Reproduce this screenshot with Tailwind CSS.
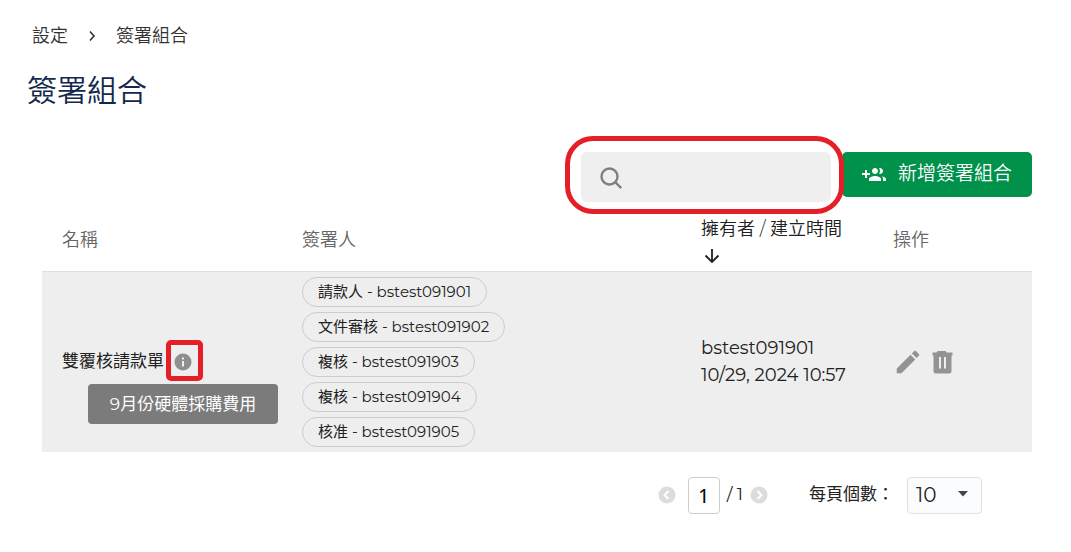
<!DOCTYPE html>
<html lang="zh-Hant">
<head>
  <meta charset="UTF-8" />
  <meta name="viewport" content="width=device-width, initial-scale=1.0"/>
  <title>簽署組合</title>
  <script src="https://cdn.jsdelivr.net/npm/@tailwindcss/browser@4"></script>
</head>
<body class="bg-white text-[#212121] font-['Montserrat','Inter','Noto_Sans_CJK_TC',sans-serif]">
  <main class="pt-[23px] pr-[39px] pb-8 pl-[27px]">
    <!-- Breadcrumb -->
    <nav class="flex items-center pl-[5px] text-[18px] leading-[26px] font-[350] text-[#333]" aria-label="breadcrumb">
      <a href="#">設定</a>
      <svg class="mx-[15px] size-[18px]" viewBox="0 0 18 18" fill="none" stroke="currentColor" stroke-width="1.6"><path d="M7 4.5l4 4.5-4 4.5"/></svg>
      <a href="#">簽署組合</a>
    </nav>
    <h1 class="mt-5 text-[30px] leading-[44px] font-[350] text-[#12284c]">簽署組合</h1>

    <section class="mt-[39px] pl-[15px]">
      <!-- Toolbar -->
      <div class="flex items-start justify-end gap-[11px]">
        <div class="relative w-[250px]">
          <input type="search" aria-label="搜尋" class="block h-[50px] w-full rounded-md bg-[#efefef] pl-[52px] pr-3 text-[17px] outline-none"/>
          <svg class="absolute left-[18px] top-[14px] size-6" viewBox="0 0 24 24" fill="none" stroke="#808080" stroke-width="2.4"><circle cx="10.5" cy="10.5" r="8"/><path d="M16.2 16.2l6 6"/></svg>
          <span class="absolute -top-4 -bottom-3 -left-4 -right-[13px] z-10 rounded-[28px] border-5 border-[#e51f28] pointer-events-none"></span>
        </div>
        <button type="button" class="flex h-[45px] items-center rounded-[5px] bg-[#00914b] px-5 text-[19px] font-[350] text-white">
          <svg class="mr-3 size-6" viewBox="0 0 24 24" fill="currentColor"><path d="M8 10H5V7H3v3H0v2h3v3h2v-3h3v-2zm10 1c1.66 0 2.99-1.34 2.99-3S19.66 5 18 5c-.32 0-.63.05-.91.14.57.81.9 1.79.9 2.86s-.34 2.04-.9 2.86c.28.09.59.14.91.14zm-5 0c1.66 0 2.99-1.34 2.99-3S14.66 5 13 5c-1.66 0-3 1.34-3 3s1.34 3 3 3zm6.62 2.16c.83.73 1.38 1.66 1.38 2.84v2h3v-2c0-1.54-2.37-2.49-4.38-2.84zM13 13c-2 0-6 1-6 3v2h12v-2c0-2-4-3-6-3z"/></svg>
          新增簽署組合
        </button>
      </div>

      <!-- Table -->
      <table class="mt-2 w-full table-fixed text-left text-[17px]">
        <colgroup>
          <col class="w-[240px]"/>
          <col/>
          <col class="w-[192px]"/>
          <col class="w-[159px]"/>
        </colgroup>
        <thead>
          <tr class="h-[61px] border-b border-[#e0e0e0] text-[18px] text-[#666]">
            <th class="px-5 font-[350]">名稱</th>
            <th class="px-5 font-[350]">簽署人</th>
            <th class="pl-5 font-[350] whitespace-nowrap text-[#212121]">
              <span class="block leading-[30px]">擁有者 / 建立時間</span>
              <svg class="mt-[2px] ml-[1px] size-5" viewBox="0 0 20 20" fill="none" stroke="currentColor" stroke-width="1.8"><path d="M10 3v13M3.5 9.5l6.500 6.500 6.500-6.500"/></svg>
            </th>
            <th class="px-5 font-[350]">操作</th>
          </tr>
        </thead>
        <tbody>
          <tr class="bg-[#eee]">
            <td class="pl-5">
              <div class="flex items-center whitespace-nowrap">
                雙覆核請款單
                <span class="relative ml-[10px]">
                  <svg class="size-[18px]" viewBox="0 0 18 18"><circle cx="9" cy="9" r="8.500" fill="#8f8f8f"/><path d="M8 4.500h2v2H8zM8 8h2v5.500H8z" fill="#eee"/></svg>
                  <span class="absolute -top-[13px] -left-2 h-[41px] w-[37px] rounded-[5px] border-5 border-[#e51f28] pointer-events-none"></span>
                  <span role="tooltip" class="absolute top-[31px] left-1/2 -translate-x-1/2 w-[190px] rounded bg-[#7b7b7b] text-center leading-10 text-white">9月份硬體採購費用</span>
                </span>
              </div>
            </td>
            <td class="px-5 py-[5px]">
              <ul class="flex flex-col items-start gap-[5px] text-[15px] leading-7">
                <li class="rounded-full border border-[#ccc] px-[15px]">請款人 - bstest091901</li>
                <li class="rounded-full border border-[#ccc] px-[15px]">文件審核 - bstest091902</li>
                <li class="rounded-full border border-[#ccc] px-[15px]">複核 - bstest091903</li>
                <li class="rounded-full border border-[#ccc] px-[15px]">複核 - bstest091904</li>
                <li class="rounded-full border border-[#ccc] px-[15px]">核准 - bstest091905</li>
              </ul>
            </td>
            <td class="pl-5 text-[18px] leading-[27px] whitespace-nowrap">
              bstest091901<br/>
              10/29, 2024 10:57
            </td>
            <td class="pl-5">
              <div class="flex items-center gap-[5px] text-[#939393]">
                <button type="button" aria-label="編輯"><svg class="size-[30px]" viewBox="0 0 24 24" fill="currentColor"><path d="M3 17.25V21h3.750L17.810 9.940l-3.750-3.750L3 17.250zM20.710 7.040c.39-.39.39-1.020 0-1.410l-2.340-2.340c-.39-.39-1.020-.39-1.410 0l-1.830 1.830 3.750 3.750 1.830-1.830z"/></svg></button>
                <button type="button" aria-label="刪除"><svg class="size-[30px]" viewBox="0 0 30 30" fill="currentColor"><path fill-rule="evenodd" d="M9.500 4h8l1 1.500H24.500V8.500H23.500V24a2.500 2.500 0 0 1-2.500 2.500H8A2.500 2.500 0 0 1 5.500 24V8.500H4.500V5.500H8.500zM11 10v11.500h2V10zM16 10v11.500h2V10z"/></svg></button>
              </div>
            </td>
          </tr>
        </tbody>
      </table>

      <!-- Pagination -->
      <div class="mt-[25px] flex items-center justify-end pr-[50px] text-[17px]">
        <button type="button" aria-label="上一頁" disabled><svg class="size-[18px]" viewBox="0 0 18 18" fill="none"><circle cx="9" cy="9" r="8.500" fill="#dcdcdc"/><path d="M10.500 5L6.500 9l4 4" stroke="#fff" stroke-width="2"/></svg></button>
        <input type="text" aria-label="頁碼" value="1" class="ml-3 h-[37px] w-8 rounded border border-[#ccc] bg-white text-center font-['Noto_Sans',sans-serif] text-[20px] text-black"/>
        <span class="mx-[7px]">/ 1</span>
        <button type="button" aria-label="下一頁" disabled><svg class="size-[18px]" viewBox="0 0 18 18" fill="none"><circle cx="9" cy="9" r="8.500" fill="#dcdcdc"/><path d="M7.500 5l4 4-4 4" stroke="#fff" stroke-width="2"/></svg></button>
        <label for="per-page" class="ml-[41px]">每頁個數：</label>
        <div class="relative ml-[13px]">
          <select id="per-page" class="block h-[37px] w-[75px] appearance-none rounded border border-[#dee2e6] bg-[#fafcfd] pl-2 text-[20px]">
            <option>10</option>
            <option>20</option>
            <option>50</option>
          </select>
          <svg class="absolute right-[14px] top-[14px] h-[6px] w-[10px] pointer-events-none" viewBox="0 0 10 6" fill="#444"><path d="M0 0h10L5 5.500z"/></svg>
        </div>
      </div>
    </section>
  </main>
</body>
</html>
